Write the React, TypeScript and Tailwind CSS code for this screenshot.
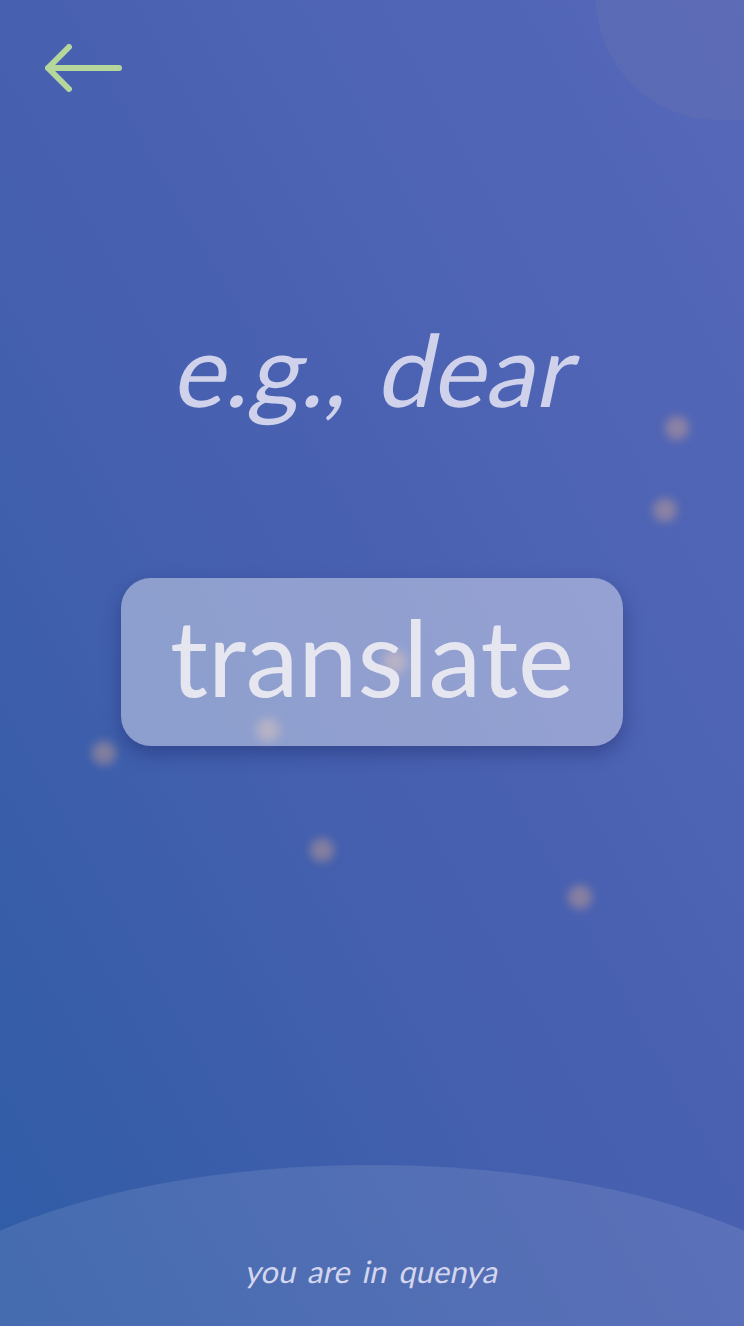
const dots = [
  { x: 677, y: 428 },
  { x: 665, y: 510 },
  { x: 104, y: 753 },
  { x: 268, y: 730 },
  { x: 322, y: 850 },
  { x: 580, y: 897 },
  { x: 395, y: 662 },
];

export default function App() {
  return (
    <div
      className="relative w-[744px] h-[1326px] overflow-hidden bg-gradient-to-tr from-[#2f5ca6] via-[#4860b0] to-[#5668ba]"
      style={{ fontFamily: "Lato, 'Open Sans', sans-serif" }}
    >
      {/* soft shapes */}
      <div className="absolute -top-[125px] left-[596px] w-[270px] h-[245px] rounded-full bg-[#8a88a8]/15" />
      <div className="absolute top-[1165px] -left-[140px] w-[1024px] h-[420px] rounded-[50%] bg-white/10" />
      {dots.map((d, i) => (
        <div
          key={i}
          className="absolute w-[24px] h-[24px] rounded-full bg-[#e6b08a]/40 blur-[5px]"
          style={{ left: d.x - 12, top: d.y - 12 }}
        />
      ))}

      <div className="relative flex flex-col h-full">
        <div className="pt-[44px] pl-[45px]">
          <svg width="80" height="48" viewBox="0 0 80 48" fill="none">
            <path
              d="M3 24 H74 M24 3 L3 24 L24 45"
              stroke="#b6d79c"
              strokeWidth="6"
              strokeLinecap="round"
              strokeLinejoin="round"
            />
          </svg>
        </div>

        <div className="mt-[226px] flex justify-center pl-[14px]">
          <span className="inline-block -skew-x-12 text-[100px] leading-none text-[#cfd2ea] [word-spacing:4px]">
            e.g., dear
          </span>
        </div>

        <div className="flex justify-center mt-[160px]">
          <button className="w-[502px] h-[168px] rounded-[30px] bg-white/40 shadow-[0_8px_18px_rgba(20,30,90,0.35)] flex items-center justify-center">
            <span className="text-[106px] leading-none text-[#e6e6f0] -mt-[12px]">translate</span>
          </button>
        </div>

        <div className="mt-auto pb-[32px] flex justify-center pl-[2px]">
          <span className="inline-block -skew-x-12 text-[31px] text-[#d3d6ee] [word-spacing:4px]">
            you are in quenya
          </span>
        </div>
      </div>
    </div>
  );
}
